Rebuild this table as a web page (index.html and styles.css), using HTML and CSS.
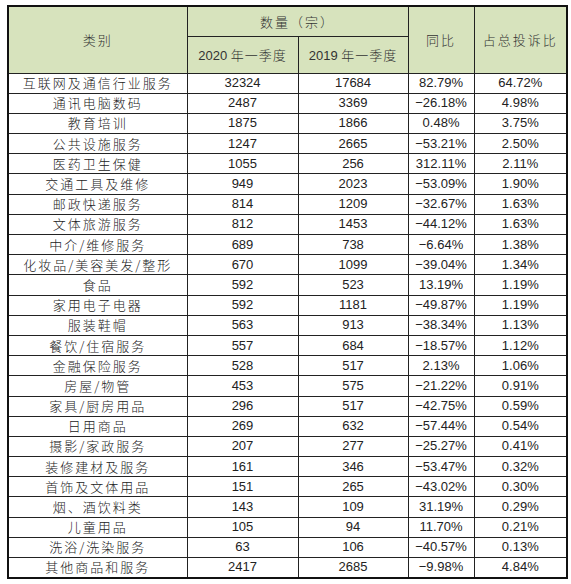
FILE: index.html
```html
<!DOCTYPE html>
<html lang="zh-CN">
  <head>
    <meta charset="UTF-8" />
    <meta name="viewport" content="width=device-width, initial-scale=1.0" />
    <title>投诉类别统计</title>
    <link rel="stylesheet" href="styles.css">
  </head>
  <body>
    <table class="stats">
      <colgroup>
        <col class="c-type" />
        <col class="c-num" />
        <col class="c-num2" />
        <col class="c-yoy" />
        <col class="c-share" />
      </colgroup>
      <thead>
        <tr class="head-top">
          <th rowspan="2" class="cn">类别</th>
          <th colspan="2" class="cn">数量（宗）</th>
          <th rowspan="2" class="cn">同比</th>
          <th rowspan="2" class="cn">占总投诉比</th>
        </tr>
        <tr class="head-sub">
          <th>2020 <span class="cn">年一季度</span></th>
          <th>2019 <span class="cn">年一季度</span></th>
        </tr>
      </thead>
      <tbody>
        <tr><td class="cn">互联网及通信行业服务</td><td>32324</td><td>17684</td><td>82.79%</td><td>64.72%</td></tr>
        <tr><td class="cn">通讯电脑数码</td><td>2487</td><td>3369</td><td>−26.18%</td><td>4.98%</td></tr>
        <tr><td class="cn">教育培训</td><td>1875</td><td>1866</td><td>0.48%</td><td>3.75%</td></tr>
        <tr><td class="cn">公共设施服务</td><td>1247</td><td>2665</td><td>−53.21%</td><td>2.50%</td></tr>
        <tr><td class="cn">医药卫生保健</td><td>1055</td><td>256</td><td>312.11%</td><td>2.11%</td></tr>
        <tr><td class="cn">交通工具及维修</td><td>949</td><td>2023</td><td>−53.09%</td><td>1.90%</td></tr>
        <tr><td class="cn">邮政快递服务</td><td>814</td><td>1209</td><td>−32.67%</td><td>1.63%</td></tr>
        <tr><td class="cn">文体旅游服务</td><td>812</td><td>1453</td><td>−44.12%</td><td>1.63%</td></tr>
        <tr><td class="cn">中介/维修服务</td><td>689</td><td>738</td><td>−6.64%</td><td>1.38%</td></tr>
        <tr><td class="cn">化妆品/美容美发/整形</td><td>670</td><td>1099</td><td>−39.04%</td><td>1.34%</td></tr>
        <tr><td class="cn">食品</td><td>592</td><td>523</td><td>13.19%</td><td>1.19%</td></tr>
        <tr><td class="cn">家用电子电器</td><td>592</td><td>1181</td><td>−49.87%</td><td>1.19%</td></tr>
        <tr><td class="cn">服装鞋帽</td><td>563</td><td>913</td><td>−38.34%</td><td>1.13%</td></tr>
        <tr><td class="cn">餐饮/住宿服务</td><td>557</td><td>684</td><td>−18.57%</td><td>1.12%</td></tr>
        <tr><td class="cn">金融保险服务</td><td>528</td><td>517</td><td>2.13%</td><td>1.06%</td></tr>
        <tr><td class="cn">房屋/物管</td><td>453</td><td>575</td><td>−21.22%</td><td>0.91%</td></tr>
        <tr><td class="cn">家具/厨房用品</td><td>296</td><td>517</td><td>−42.75%</td><td>0.59%</td></tr>
        <tr><td class="cn">日用商品</td><td>269</td><td>632</td><td>−57.44%</td><td>0.54%</td></tr>
        <tr><td class="cn">摄影/家政服务</td><td>207</td><td>277</td><td>−25.27%</td><td>0.41%</td></tr>
        <tr><td class="cn">装修建材及服务</td><td>161</td><td>346</td><td>−53.47%</td><td>0.32%</td></tr>
        <tr><td class="cn">首饰及文体用品</td><td>151</td><td>265</td><td>−43.02%</td><td>0.30%</td></tr>
        <tr><td class="cn">烟、酒饮料类</td><td>143</td><td>109</td><td>31.19%</td><td>0.29%</td></tr>
        <tr><td class="cn">儿童用品</td><td>105</td><td>94</td><td>11.70%</td><td>0.21%</td></tr>
        <tr><td class="cn">洗浴/洗染服务</td><td>63</td><td>106</td><td>−40.57%</td><td>0.13%</td></tr>
        <tr><td class="cn">其他商品和服务</td><td>2417</td><td>2685</td><td>−9.98%</td><td>4.84%</td></tr>
      </tbody>
    </table>
  </body>
</html>
```

FILE: styles.css
```css
* {
  box-sizing: border-box;
}

body {
  margin: 0;
  padding: 5px 0 0 7px;
  background-color: #fff;
  color: #222;
  font-family: 'Liberation Sans', Arial, 'Noto Sans CJK SC', sans-serif;
}

.stats {
  border-collapse: collapse;
  table-layout: fixed;
  width: 559px;
  border: 2px solid #111;
}

.c-type {
  width: 179px;
}
.c-num {
  width: 111px;
}
.c-num2 {
  width: 110px;
}
.c-yoy {
  width: 66px;
}
.c-share {
  width: 93px;
}

th,
td {
  border: 1px solid #222;
  padding: 0;
  text-align: center;
  font-size: 13px;
  font-weight: 400;
  white-space: nowrap;
  overflow: hidden;
}

thead th {
  background-color: #d7e3bd;
  color: #333;
}

.head-top {
  height: 30px;
}

.head-sub {
  height: 37px;
}

tbody tr {
  height: 20.2px;
}

td {
  line-height: 18px;
}

.cn {
  font-family: 'Noto Sans CJK SC', sans-serif;
  font-weight: 300;
  letter-spacing: 2px;
  font-size: 13px;
}

th span.cn {
  letter-spacing: 1px;
}
```
